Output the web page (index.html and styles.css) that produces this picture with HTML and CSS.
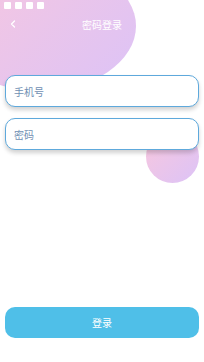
FILE: index.html
```html
<!DOCTYPE html>
<html lang="zh">

    <head>
        <meta charset="UTF-8">
        <meta name="viewport" content="width=device-width, initial-scale=1.0">
        <title>密码登录</title>
        <link rel="stylesheet" href="styles.css">
    </head>

    <body>
        <div class="page">
            <div class="blob blob-top"></div>
            <div class="blob blob-side"></div>

            <div class="status-bar">
                <span></span><span></span><span></span><span></span>
            </div>

            <div class="header">
                <svg class="back" width="6" height="8" viewBox="0 0 6 8">
                    <path d="M4.5 1 L1.5 4 L4.5 7" fill="none" stroke="#fff" stroke-width="1.3" stroke-linecap="round" stroke-linejoin="round" />
                </svg>
                <h2>密码登录</h2>
            </div>

            <form class="login" action="#" method="post">
                <div class="form-group">
                    <input type="text" id="phone" name="phone" placeholder="手机号">
                </div>
                <div class="form-group">
                    <input type="password" id="password" name="password" placeholder="密码">
                </div>
            </form>

            <div class="actions">
                <button type="button" id="login">登录</button>
            </div>
        </div>
    </body>

</html>
```

FILE: styles.css
```css
* {
    margin: 0;
    padding: 0;
    box-sizing: border-box;
    font-family: "Noto Sans CJK SC", "Noto Sans", sans-serif;
}

body {
    background-color: #fff;
    width: 204px;
    height: 362px;
    overflow: hidden;
}

.page {
    position: relative;
    display: flex;
    flex-direction: column;
    height: 362px;
    overflow: hidden;
}

.blob {
    position: absolute;
    border-radius: 50%;
    background: linear-gradient(135deg, #f9c7dd, #dcc3f7);
    z-index: 0;
}

.blob-top {
    left: -56px;
    top: -39px;
    width: 192px;
    height: 130px;
}

.blob-side {
    left: 146px;
    top: 130px;
    width: 53px;
    height: 53px;
}

.status-bar {
    position: relative;
    display: flex;
    gap: 4px;
    padding: 2px 0 0 4px;
    height: 14px;
}

.status-bar span {
    width: 7px;
    height: 7px;
    border-radius: 1px;
    background-color: #fff;
}

.header {
    position: relative;
    height: 20px;
    display: flex;
    align-items: center;
    justify-content: center;
}

.back {
    position: absolute;
    left: 10px;
    top: 6px;
}

h2 {
    font-size: 10px;
    font-weight: normal;
    color: #fff;
}

.login {
    position: relative;
    padding: 41px 5px 0;
}

.form-group {
    margin-bottom: 11px;
}

input[type="text"],
input[type="password"] {
    width: 100%;
    height: 32px;
    padding: 0 8px;
    border: 1px solid #5ea9dc;
    border-radius: 10px;
    background-color: #fff;
    box-shadow: 0 3px 4px rgba(0, 0, 0, 0.18);
    font-size: 10px;
    color: #333;
    outline: none;
}

input::placeholder {
    color: #6f8fb3;
}

.actions {
    position: relative;
    margin-top: auto;
    padding: 0 5px 24px;
}

button {
    width: 100%;
    height: 31px;
    border: none;
    border-radius: 10px;
    background-color: #4fbfe8;
    color: #fff;
    font-size: 10px;
    cursor: pointer;
}
```
